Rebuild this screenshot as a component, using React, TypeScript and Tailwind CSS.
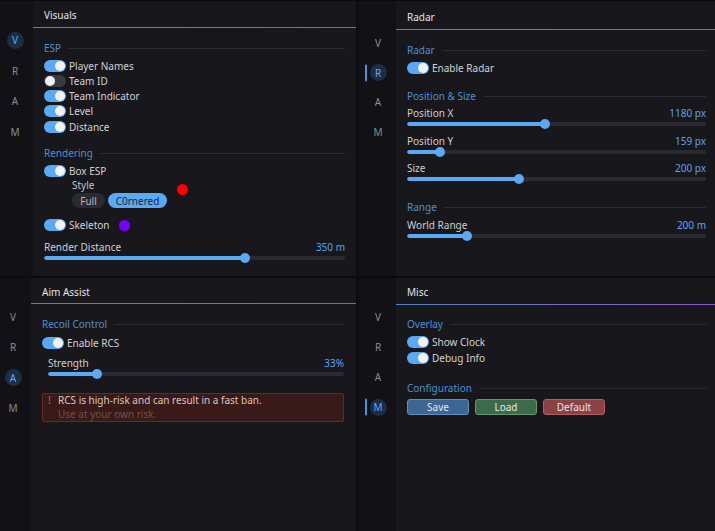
import React from "react";

const Toggle = ({ on = true }: { on?: boolean }) => (
  <div
    className={
      on
        ? "w-[22px] h-[12px] rounded-full flex items-center justify-end px-[1px] shrink-0 bg-[#5aa9f4]"
        : "w-[22px] h-[12px] rounded-full flex items-center justify-start px-[1px] shrink-0 bg-[#3a3a42]"
    }
  >
    <div className="w-[10px] h-[10px] rounded-full bg-[#f2f2f4]" />
  </div>
);

const ToggleRow = ({
  label,
  on = true,
  h = "h-[15.25px]",
  children,
}: {
  label: string;
  on?: boolean;
  h?: string;
  children?: React.ReactNode;
}) => (
  <div className={`flex items-center ${h}`}>
    <Toggle on={on} />
    <span className="ml-[3px] text-[#d2d2d7]">{label}</span>
    {children}
  </div>
);

const SectionLabel = ({ title }: { title: string }) => (
  <div className="flex items-center h-[12px]">
    <span className="text-[#4f8fcf]">{title}</span>
    <div className="flex-1 h-px bg-[#2a2a31] ml-[7px]" />
  </div>
);

const Slider = ({ label, value, pct }: { label: string; value: string; pct: number }) => (
  <div>
    <div className="flex justify-between items-center h-[12px]">
      <span className="text-[#cfcfd4]">{label}</span>
      <span className="text-[#5ba4ec]">{value}</span>
    </div>
    <div className="relative h-[10px] flex items-center">
      <div className="w-full h-[4px] rounded-full bg-[#2a2a33] overflow-hidden">
        <div className="h-full rounded-full bg-[#5aa9f4]" style={{ width: `${pct}%` }} />
      </div>
      <div
        className="absolute top-0 w-[10px] h-[10px] -ml-[5px] rounded-full bg-[#5aa9f4]"
        style={{ left: `${pct}%` }}
      />
    </div>
  </div>
);

const SideItem = ({ letter, active, h, bar }: { letter: string; active?: boolean; h: string; bar?: boolean }) => (
  <div className={`relative flex items-center justify-center ${h}`}>
    {bar && active && (
      <div className="absolute left-[5px] top-1/2 -translate-y-1/2 w-[2px] h-[17px] bg-[#4a92e2] rounded-full" />
    )}
    {active ? (
      <div className="w-[17px] h-[17px] rounded-full bg-[#1c2e44] flex items-center justify-center text-[#64a8ee]">
        {letter}
      </div>
    ) : (
      <span className="text-[#8b8b92]">{letter}</span>
    )}
  </div>
);

const Sidebar = ({
  active,
  cls,
  itemH,
  bar,
}: {
  active: string;
  cls: string;
  itemH: string;
  bar?: boolean;
}) => (
  <div className={`shrink-0 bg-[#121216] flex flex-col ${cls}`}>
    {["V", "R", "A", "M"].map((l) => (
      <SideItem key={l} letter={l} active={l === active} h={itemH} bar={bar} />
    ))}
  </div>
);

const Header = ({ title, cls }: { title: string; cls: string }) => (
  <>
    <div className={`text-[#e4e4e8] ${cls}`}>{title}</div>
    <div className="h-px bg-linear-to-r from-[#4d86c8] to-[#8d55c9]" />
  </>
);

export default function App() {
  return (
    <div className="w-[715px] h-[531px] overflow-hidden grid grid-cols-[357px_358px] grid-rows-[278px_253px] bg-[#0d0d10] font-['Noto_Sans',sans-serif] text-[10px] leading-[12px]">
      {/* Top-left: Visuals */}
      <div className="flex border-r border-b border-[#0b0b0d] border-b-2 border-t border-t-[#0c0c0f]">
        <Sidebar active="V" cls="w-[33px] pr-[3px] pt-[24px]" itemH="h-[30.5px]" />
        <div className="flex-1 bg-[#17171c] flex flex-col">
          <Header title="Visuals" cls="h-[26px] pt-[8px] pl-[11px]" />
          <div className="px-[11px] pt-[14px]">
            <SectionLabel title="ESP" />
            <div className="mt-[4px]">
              <ToggleRow label="Player Names" />
              <ToggleRow label="Team ID" on={false} />
              <ToggleRow label="Team Indicator" />
              <ToggleRow label="Level" />
              <ToggleRow label="Distance" />
            </div>
            <div className="mt-[13px]">
              <SectionLabel title="Rendering" />
            </div>
            <div className="mt-[4px]">
              <ToggleRow label="Box ESP" />
            </div>
            <div className="flex ml-[28px]">
              <div className="flex flex-col">
                <div className="h-[12px] text-[#c4c4ca]">Style</div>
                <div className="flex gap-[3px] mt-[2.5px]">
                  <div className="w-[33px] h-[15px] rounded-full bg-[#2a2a33] text-[#b8b8c0] flex items-center justify-center">
                    Full
                  </div>
                  <div className="w-[59px] h-[15px] rounded-full bg-[#5aa9f4] text-[#18263a] flex items-center justify-center">
                    C0rnered
                  </div>
                </div>
              </div>
              <div className="ml-[10px] mt-[5.5px] w-[11px] h-[11px] rounded-full bg-[#ff0000]" />
            </div>
            <div className="mt-[9.5px]">
              <ToggleRow label="Skeleton">
                <div className="ml-[9px] w-[11px] h-[11px] rounded-full bg-[#7a00ff]" />
              </ToggleRow>
            </div>
            <div className="mt-[8px]">
              <Slider label="Render Distance" value="350 m" pct={66.8} />
            </div>
          </div>
        </div>
      </div>

      {/* Top-right: Radar */}
      <div className="flex border-b-2 border-[#0b0b0d] border-t border-t-[#0c0c0f]">
        <div className="w-[3px] bg-[#0f0f12] shrink-0" />
        <Sidebar active="R" cls="w-[36px] pt-[27px]" itemH="h-[29.7px]" bar />
        <div className="flex-1 bg-[#17171c] flex flex-col">
          <Header title="Radar" cls="h-[28px] pt-[10px] pl-[11px]" />
          <div className="pl-[11px] pr-[9px] pt-[14px]">
            <SectionLabel title="Radar" />
            <div className="mt-[4.4px]">
              <ToggleRow label="Enable Radar" />
            </div>
            <div className="mt-[14.4px]">
              <SectionLabel title="Position & Size" />
            </div>
            <div className="mt-[5px]">
              <Slider label="Position X" value="1180 px" pct={46.2} />
            </div>
            <div className="mt-[6px]">
              <Slider label="Position Y" value="159 px" pct={11} />
            </div>
            <div className="mt-[5px]">
              <Slider label="Size" value="200 px" pct={37.5} />
            </div>
            <div className="mt-[17px]">
              <SectionLabel title="Range" />
            </div>
            <div className="mt-[6px]">
              <Slider label="World Range" value="200 m" pct={20} />
            </div>
          </div>
        </div>
      </div>

      {/* Bottom-left: Aim Assist */}
      <div className="flex border-r border-[#0b0b0d]">
        <Sidebar active="A" cls="w-[31px] pr-[5px] pt-[24px]" itemH="h-[30.3px]" />
        <div className="flex-1 bg-[#17171c] flex flex-col">
          <Header title="Aim Assist" cls="h-[25px] pt-[7.5px] pl-[11px]" />
          <div className="pl-[11px] pr-[12px] pt-[14px]">
            <SectionLabel title="Recoil Control" />
            <div className="mt-[5.4px]">
              <ToggleRow label="Enable RCS" />
            </div>
            <div className="mt-[6.4px] ml-[6px]">
              <Slider label="Strength" value="33%" pct={16.6} />
            </div>
            <div className="mt-[14px] flex border border-[#6a2822] bg-[#3a1a18] rounded-[2px] pl-[5px] leading-[13.6px]">
              <div className="text-[#e4564a] w-[10px]">!</div>
              <div className="flex flex-col">
                <div className="text-[#d9c6c1]">RCS is high-risk and can result in a fast ban.</div>
                <div className="text-[#72504a]">Use at your own risk.</div>
              </div>
            </div>
          </div>
        </div>
      </div>

      {/* Bottom-right: Misc */}
      <div className="flex">
        <div className="w-[3px] bg-[#0f0f12] shrink-0" />
        <Sidebar active="M" cls="w-[36px] pt-[24px]" itemH="h-[30px]" bar />
        <div className="flex-1 bg-[#17171c] flex flex-col">
          <Header title="Misc" cls="h-[26px] pt-[8px] pl-[11px]" />
          <div className="pl-[11px] pr-[8px] pt-[13px]">
            <SectionLabel title="Overlay" />
            <div className="mt-[4px]">
              <ToggleRow label="Show Clock" h="h-[16px]" />
              <ToggleRow label="Debug Info" h="h-[16px]" />
            </div>
            <div className="mt-[16px]">
              <SectionLabel title="Configuration" />
            </div>
            <div className="mt-[5px] flex gap-[6px]">
              <div className="w-[62px] h-[16px] rounded-[3px] border border-[#5b90c6] bg-[#3c6795] text-[#e2e8f0] flex items-center justify-center">
                Save
              </div>
              <div className="w-[62px] h-[16px] rounded-[3px] border border-[#5f9a6d] bg-[#3e6a4c] text-[#e2eee5] flex items-center justify-center">
                Load
              </div>
              <div className="w-[62px] h-[16px] rounded-[3px] border border-[#b65b5f] bg-[#8a4246] text-[#f0e2e3] flex items-center justify-center">
                Default
              </div>
            </div>
          </div>
        </div>
      </div>
    </div>
  );
}
